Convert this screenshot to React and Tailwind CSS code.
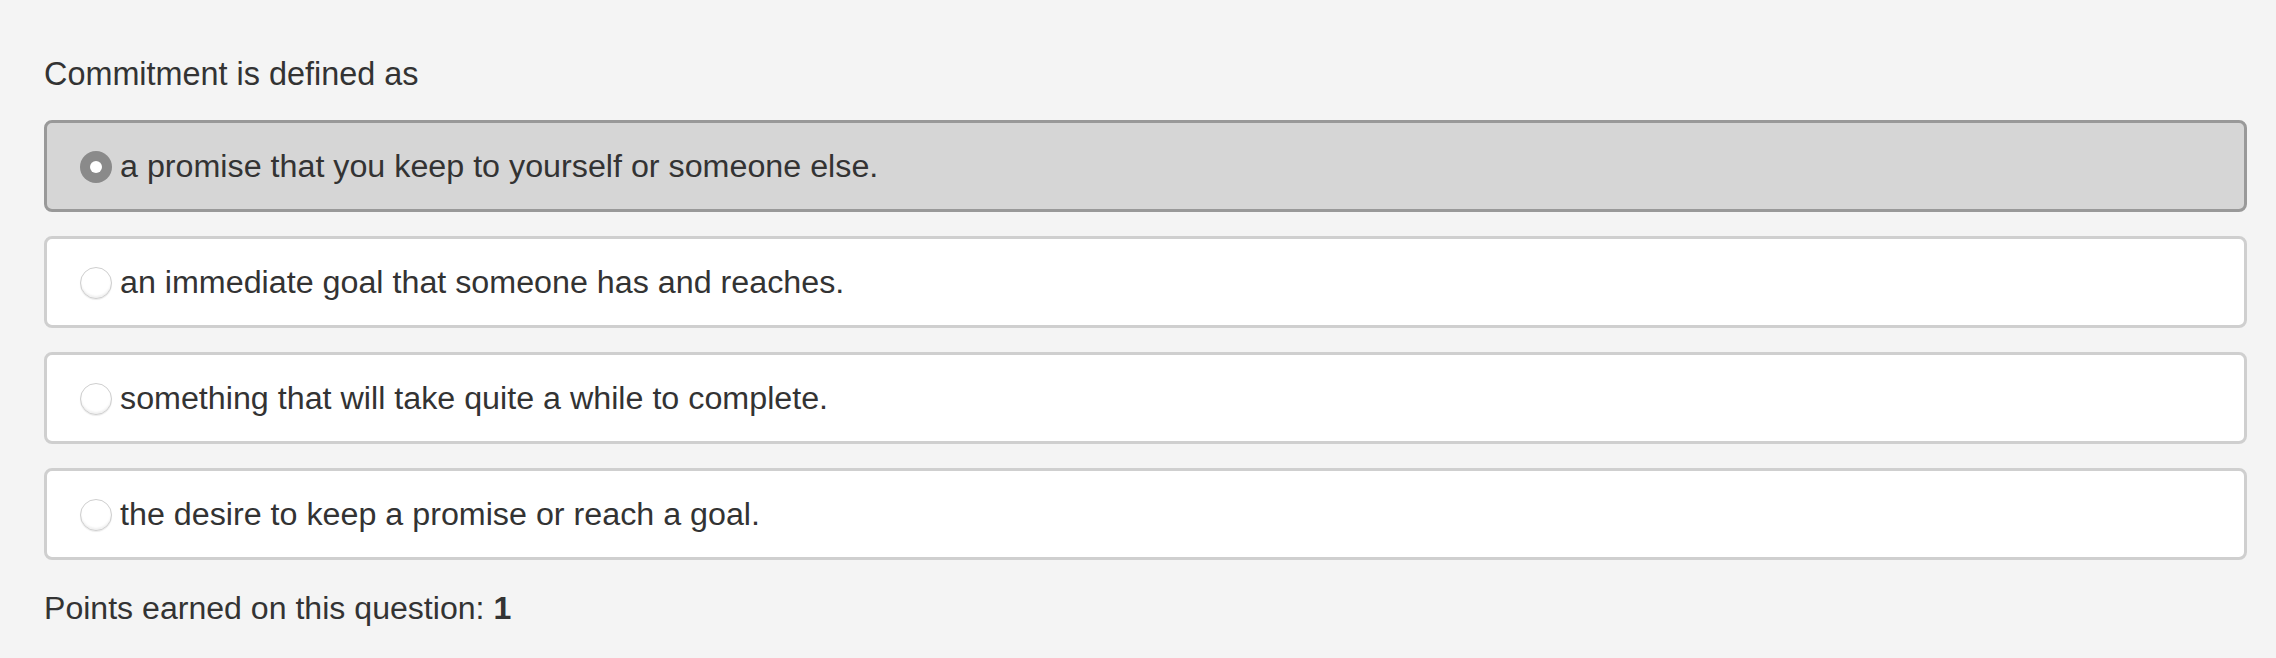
import React from 'react';

const options = [
    'a promise that you keep to yourself or someone else.',
    'an immediate goal that someone has and reaches.',
    'something that will take quite a while to complete.',
    'the desire to keep a promise or reach a goal.',
];

const Radio = ({ checked }) => (
    checked ? (
        <span className="mt-[2px] w-[32px] h-[32px] shrink-0 rounded-full bg-[#8a8a8a] flex items-center justify-center">
            <span className="w-[12px] h-[12px] rounded-full bg-white" />
        </span>
    ) : (
        <span className="mt-[2px] w-[32px] h-[32px] shrink-0 rounded-full bg-white border border-[#cfcfcf] shadow-[inset_0_-2px_2px_rgba(0,0,0,0.06),0_1px_1px_rgba(0,0,0,0.08)]" />
    )
);

export default function App() {
    const selected = 0;

    return (
        <div
            className="min-h-[658px] bg-[#f4f4f4] pl-[44px] pr-[29px] pt-[56px] text-[#333333]"
            style={{ fontFamily: '"Liberation Sans", Arial, sans-serif' }}
        >
            {/* Question */}
            <p className="text-[32.4px] leading-[36px]">Commitment is defined as</p>

            {/* Answers */}
            <div className="mt-[28px] flex flex-col gap-[24px]">
                {options.map((text, i) => (
                    <label
                        key={i}
                        className={`h-[92px] flex items-center pl-[33px] rounded-[8px] border-[3px] ${i === selected ? 'bg-[#d6d6d6] border-[#999999]' : 'bg-white border-[#cfcfcf]'}`}
                    >
                        <Radio checked={i === selected} />
                        <span className="ml-[8px] text-[32.25px] leading-[36px]">{text}</span>
                    </label>
                ))}
            </div>

            <p className="mt-[30px] text-[32.1px] leading-[36px]">
                Points earned on this question: <span className="font-bold">1</span>
            </p>
        </div>
    );
}
